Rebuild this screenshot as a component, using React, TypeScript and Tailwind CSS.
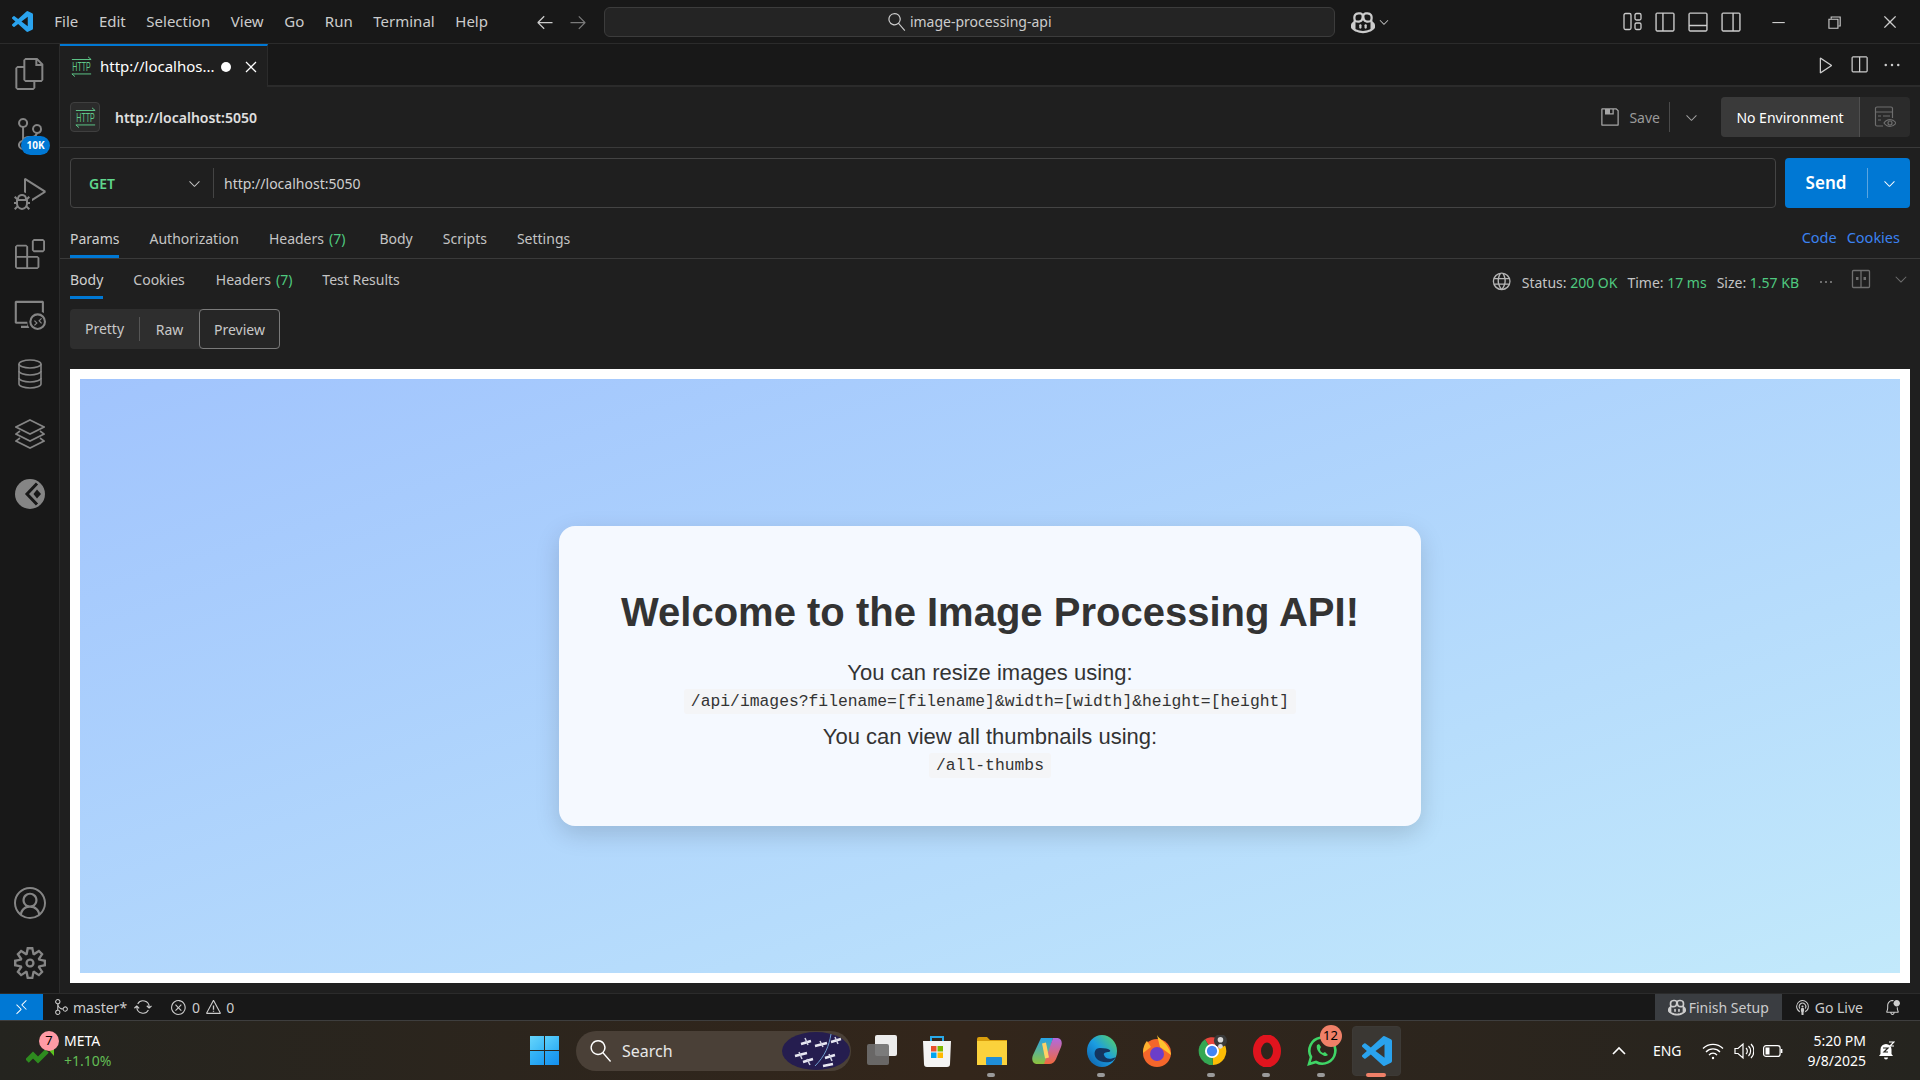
// App.tsx: VS Code window with a Thunder Client style request tab, over the Windows taskbar
import type { ReactNode } from 'react'
import {
  VscAccount,
  VscArrowLeft,
  VscArrowRight,
  VscBellDot,
  VscBroadcast,
  VscChevronDown,
  VscChromeClose,
  VscChromeMinimize,
  VscChromeRestore,
  VscClose,
  VscCopilot,
  VscDebugAlt,
  VscEllipsis,
  VscError,
  VscExtensions,
  VscFiles,
  VscGitMerge,
  VscGlobe,
  VscLayoutPanelOff,
  VscLayoutSidebarLeftOff,
  VscLayoutSidebarRightOff,
  VscPlay,
  VscRemote,
  VscRemoteExplorer,
  VscSave,
  VscSearch,
  VscSettingsGear,
  VscSourceControl,
  VscSplitHorizontal,
  VscSync,
  VscWarning,
} from 'react-icons/vsc'

const MENU = ['File', 'Edit', 'Selection', 'View', 'Go', 'Run', 'Terminal', 'Help']

function HttpIcon({ size = 24 }: { size?: number }) {
  return (
    <svg width={size} height={size} viewBox="0 0 24 24" fill="none" stroke="#5fc98a" strokeWidth="1.1" overflow="visible">
      <path d="M1 4h22M19.500 1l3.500 3M1 20.500h22M1 20.500l3.500 3" />
      <text
        x="12"
        y="17"
        textAnchor="middle"
        fill="#5fc98a"
        stroke="none"
        fontSize="14"
        textLength="21"
        lengthAdjust="spacingAndGlyphs"
        fontFamily="'Liberation Sans', sans-serif"
      >
        HTTP
      </text>
    </svg>
  )
}

function ActivityItem({ children }: { children: ReactNode }) {
  return <div className="relative flex h-[60px] items-center justify-center text-[#858585]">{children}</div>
}

function ActivityBar() {
  return (
    <div className="flex w-[60px] shrink-0 flex-col border-r border-[#2b2b2b] bg-[#181818]">
      <ActivityItem>
        <VscFiles size={32} />
      </ActivityItem>
      <ActivityItem>
        <VscSourceControl size={32} />
        <span className="absolute left-[21px] top-[32px] flex h-[19px] w-[29px] items-center justify-center rounded-full bg-[#0078d4] text-[10px] font-bold text-white">
          10K
        </span>
      </ActivityItem>
      <ActivityItem>
        <VscDebugAlt size={32} />
      </ActivityItem>
      <ActivityItem>
        <VscExtensions size={30} />
      </ActivityItem>
      <ActivityItem>
        <VscRemoteExplorer size={32} />
      </ActivityItem>
      <ActivityItem>
        <svg width="24" height="30" viewBox="0 0 24 30" fill="none" stroke="currentColor" strokeWidth="1.600">
          <ellipse cx="12" cy="5" rx="11" ry="4" />
          <path d="M1 5v20c0 2.200 5 4 11 4s11-1.800 11-4V5" />
          <path d="M1 12c0 2.200 5 4 11 4s11-1.800 11-4M1 19c0 2.200 5 4 11 4s11-1.800 11-4" />
        </svg>
      </ActivityItem>
      <ActivityItem>
        <svg width="30" height="30" viewBox="0 0 30 30" fill="none" stroke="currentColor" strokeWidth="1.600">
          <path d="M15 1l14 7-14 7L1 8z" />
          <path d="M5 12l-4 3 14 7 14-7-4-3" />
          <path d="M5 19l-4 3 14 7 14-7-4-3" />
        </svg>
      </ActivityItem>
      <ActivityItem>
        <svg width="30" height="30" viewBox="0 0 30 30">
          <circle cx="15" cy="15" r="15" fill="#858585" />
          <path d="M22 4.500 L12 15 L22 25.500" fill="none" stroke="#181818" strokeWidth="3" />
          <path d="M22 10.500 L26 15 L22 19.500 L18.500 15 Z" fill="#181818" />
        </svg>
      </ActivityItem>
      <div className="flex-1" />
      <ActivityItem>
        <VscAccount size={32} />
      </ActivityItem>
      <ActivityItem>
        <VscSettingsGear size={32} />
      </ActivityItem>
    </div>
  )
}

function TitleBar() {
  return (
    <div className="flex h-[44px] shrink-0 items-center border-b border-[#2b2b2b] bg-[#181818] text-[#cccccc]">
      <div className="flex w-[44px] justify-center pl-[1px]">
        <VsCodeLogo size={21} />
      </div>
      <div className="flex text-[15px]">
        {MENU.map((m) => (
          <span key={m} className="px-[10.300px]">
            {m}
          </span>
        ))}
      </div>
      <div className="ml-[37px] flex w-[53px] items-center justify-between text-[#cccccc]">
        <VscArrowLeft size={20} />
        <VscArrowRight size={20} className="text-[#7a7a7a]" />
      </div>
      <div className="ml-[16px] flex h-[30px] w-[731px] items-center justify-center gap-[4px] rounded-[6px] border border-[#3c3c3c] bg-[#242424] text-[14px]">
        <VscSearch size={18} className="-scale-x-100" />
        <span>image-processing-api</span>
      </div>
      <div className="ml-[16px] flex items-center gap-[2px]">
        <VscCopilot size={24} />
        <VscChevronDown size={14} />
      </div>
      <div className="ml-[231px] flex items-center gap-[11px]">
        <svg width="21" height="21" viewBox="0 0 21 21" fill="none" stroke="currentColor" strokeWidth="1.300">
          <rect x="2" y="2.500" width="7" height="16" rx="1.500" />
          <rect x="13" y="2.500" width="6" height="6.500" rx="1.500" />
          <rect x="13" y="12" width="6" height="6.500" rx="1.500" />
        </svg>
        <VscLayoutSidebarLeftOff size={22} />
        <VscLayoutPanelOff size={22} />
        <VscLayoutSidebarRightOff size={22} />
      </div>
      <div className="ml-[27px] flex items-center gap-[38px]">
        <VscChromeMinimize size={18} />
        <VscChromeRestore size={18} />
        <VscChromeClose size={18} />
      </div>
    </div>
  )
}

function TabStrip() {
  return (
    <div className="flex h-[43px] shrink-0 items-stretch border-b-2 border-[#2b2b2b] bg-[#181818]">
      <div className="-mb-[2px] flex w-[208px] items-center border-r border-t-2 border-[#2b2b2b] border-t-[#0078d4] bg-[#1f1f1f] pl-[11px] text-[15px] text-white">
        <HttpIcon size={21} />
        <span className="ml-[8px]">http://localhos...</span>
        <span className="ml-[6px] h-[10px] w-[10px] rounded-full bg-white" />
        <VscClose size={20} className="ml-[10px]" />
      </div>
      <div className="flex flex-1 items-center justify-end gap-[13px] pr-[18px] text-[#cccccc]">
        <VscPlay size={20} />
        <VscSplitHorizontal size={20} />
        <VscEllipsis size={20} />
      </div>
    </div>
  )
}

function RequestBar() {
  return (
    <div className="flex h-[61px] shrink-0 items-center border-b border-[#3a3a3a] pl-[10px] pr-[10px]">
      <div className="flex h-[30px] w-[30px] items-center justify-center rounded-[4px] border border-[#3f3f3f] bg-[#2b2b2b]">
        <HttpIcon size={21} />
      </div>
      <span className="ml-[15px] text-[14px] font-semibold text-[#e0e0e0]">http://localhost:5050</span>
      <div className="flex-1" />
      <VscSave size={20} className="text-[#a5a5a5]" />
      <span className="ml-[9px] text-[14px] text-[#9a9a9a]">Save</span>
      <span className="ml-[9px] h-[30px] w-px bg-[#4a4a4a]" />
      <VscChevronDown size={17} className="ml-[13px] text-[#a5a5a5]" />
      <div className="ml-[21px] flex h-[40px] w-[189px] items-center overflow-hidden rounded-[4px] bg-[#2b2b2b]">
        <div className="flex h-full w-[139px] items-center justify-center border-r border-[#4f4f4f] bg-[#3a3a3a] text-[14px] text-white">
          No Environment
        </div>
        <div className="flex flex-1 items-center justify-center text-[#6e6e6e]">
          <svg width="22" height="24" viewBox="0 0 22 24" fill="none" stroke="currentColor" strokeWidth="1.200">
            <path d="M9 21H3a1.500 1.500 0 0 1-1.500-1.500v-16A1.500 1.500 0 0 1 3 2h14a1.500 1.500 0 0 1 1.500 1.500V13" />
            <path d="M1.500 7h17M4 11h3M9 11h7M4 15h3" />
            <circle cx="16" cy="18" r="2" />
            <path d="M10 18c3-4.500 9-4.500 12 0-3 4.500-9 4.500-12 0z" />
          </svg>
        </div>
      </div>
    </div>
  )
}

function UrlRow() {
  return (
    <div className="flex shrink-0 gap-[9px] px-[10px] pt-[10px]">
      <div className="flex h-[50px] flex-1 items-center rounded-[4px] border border-[#444444]">
        <span className="ml-[18px] w-[97px] text-[14px] font-semibold text-[#5fd68c]">GET</span>
        <VscChevronDown size={17} className="text-[#c8c8c8]" />
        <span className="ml-[10px] h-[30px] w-px bg-[#444444]" />
        <span className="ml-[10px] text-[14px] text-[#cfcfcf]">http://localhost:5050</span>
      </div>
      <div className="flex h-[50px] w-[125px] items-center rounded-[4px] bg-[#0078d4] text-white">
        <span className="w-[83px] border-r border-[#5aa5e0] text-center text-[17px] font-semibold leading-[30px]">Send</span>
        <VscChevronDown size={17} className="ml-[13px]" />
      </div>
    </div>
  )
}

function TabLabel({ label, count, active, className = '' }: { label: string; count?: number; active?: boolean; className?: string }) {
  return (
    <span className={`relative flex h-full items-center text-[14px] ${active ? 'text-[#cfcfcf]' : 'text-[#c4c4c4]'} ${className}`}>
      {label}
      {count !== undefined && <span className="ml-[5px] text-[#4fc97f]">({count})</span>}
      {active && <span className="absolute bottom-0 left-0 h-[3px] w-full bg-[#0078d4]" />}
    </span>
  )
}

function RequestTabs() {
  return (
    <div className="flex h-[51px] shrink-0 items-stretch justify-between border-b border-[#3a3a3a] pl-[10px] pr-[20px]">
      <div className="flex gap-[30px]">
        <TabLabel label="Params" active className="pt-[10px]" />
        <TabLabel label="Authorization" className="pt-[10px]" />
        <TabLabel label="Headers" count={7} className="mr-[4px] pt-[10px]" />
        <TabLabel label="Body" className="pt-[10px]" />
        <TabLabel label="Scripts" className="pt-[10px]" />
        <TabLabel label="Settings" className="pt-[10px]" />
      </div>
      <div className="flex items-center gap-[10px] pt-[10px] text-[14.500px] text-[#3b82f0]">
        <span>Code</span>
        <span>Cookies</span>
      </div>
    </div>
  )
}

function ResponseTabs() {
  return (
    <div className="flex h-[40px] shrink-0 items-stretch justify-between pl-[10px] pr-[10px]">
      <div className="flex gap-[30px]">
        <TabLabel label="Body" active />
        <TabLabel label="Cookies" />
        <TabLabel label="Headers" count={7} className="ml-[1px]" />
        <TabLabel label="Test Results" />
      </div>
      <div className="flex items-center pt-[6px] text-[14px] text-[#c4c4c4]">
        <VscGlobe size={22} className="text-[#b5b5b5]" />
        <span className="ml-[10px]">
          Status: <span className="text-[#4fc97f]">200 OK</span>
        </span>
        <span className="ml-[10px]">
          Time: <span className="text-[#4fc97f]">17 ms</span>
        </span>
        <span className="ml-[10px]">
          Size: <span className="text-[#4fc97f]">1.57 KB</span>
        </span>
        <VscEllipsis size={16} className="ml-[19px] text-[#8a8a8a]" />
        <svg width="20" height="20" viewBox="0 0 20 20" className="ml-[17px] -mt-[6px] text-[#6e6e6e]" fill="none" stroke="currentColor" strokeWidth="1.300">
          <rect x="1.500" y="1.500" width="17" height="17" rx="1" />
          <path d="M10 1.500v17" />
          <rect x="5" y="8" width="2.500" height="3" fill="currentColor" stroke="none" />
          <rect x="12.500" y="8" width="2.500" height="3" fill="currentColor" stroke="none" />
        </svg>
        <VscChevronDown size={18} className="ml-[21px] -mt-[6px] text-[#6e6e6e]" />
      </div>
    </div>
  )
}

function ModeSwitch() {
  return (
    <div className="flex shrink-0 pl-[10px] pt-[10px]">
      <div className="flex h-[40px] w-[210px] items-center rounded-[4px] bg-[#2e2e2e] text-[14px] text-[#c8c8c8]">
        <span className="w-[70px] border-r border-[#555555] text-center leading-[24px]">Pretty</span>
        <span className="w-[59px] text-center">Raw</span>
        <span className="flex h-full w-[81px] items-center justify-center rounded-[4px] border border-[#7a7a7a] bg-[#262626]">
          Preview
        </span>
      </div>
    </div>
  )
}

function Preview() {
  const code =
    "rounded-[3px] bg-[#f4f5f7] px-[7px] py-[3px] text-[16.350px] leading-[19px] text-[#333333] [font-family:'Liberation_Mono',monospace]"
  return (
    <div className="mx-[10px] mb-[10px] mt-[20px] flex flex-1 bg-white p-[10px]">
      <div className="flex flex-1 items-center justify-center bg-gradient-to-br from-[#a1c4fd] to-[#c2e9fb]">
        <div className="flex h-[300px] w-[862px] flex-col items-center rounded-[16px] bg-[#f5f9ff] pt-[62px] text-center text-[#333333] shadow-[0_8px_24px_rgba(0,0,0,0.15)] [font-family:'Liberation_Sans',Arial,sans-serif]">
          <h1 className="text-[40px] font-bold leading-[48px]">Welcome to the Image Processing API!</h1>
          <p className="mt-[24px] text-[22px] leading-[26px]">You can resize images using:</p>
          <code className={`mt-[3px] ${code}`}>/api/images?filename=[filename]&amp;width=[width]&amp;height=[height]</code>
          <p className="mt-[10px] text-[22px] leading-[26px]">You can view all thumbnails using:</p>
          <code className={`mt-[3px] ${code}`}>/all-thumbs</code>
        </div>
      </div>
    </div>
  )
}

function StatusBar() {
  return (
    <div className="flex h-[27px] shrink-0 items-center border-t border-[#2b2b2b] bg-[#181818] text-[14px] text-[#cccccc]">
      <div className="flex h-full w-[43px] items-center justify-center bg-[#0078d4] text-white">
        <VscRemote size={17} />
      </div>
      <VscGitMerge size={17} className="ml-[10px]" />
      <span className="ml-[3px]">master*</span>
      <VscSync size={18} className="ml-[7px]" />
      <VscError size={17} className="ml-[18px]" />
      <span className="ml-[5px]">0</span>
      <VscWarning size={17} className="ml-[5px]" />
      <span className="ml-[4px]">0</span>
      <div className="flex-1" />
      <div className="flex h-full w-[127px] items-center justify-center gap-[3px] bg-[#3a3d41]">
        <VscCopilot size={18} />
        <span>Finish Setup</span>
      </div>
      <VscBroadcast size={17} className="ml-[12px]" />
      <span className="ml-[4px]">Go Live</span>
      <VscBellDot size={17} className="ml-[21px] mr-[19px]" />
    </div>
  )
}

function VsCodeLogo({ size = 30 }: { size?: number }) {
  return (
    <svg width={size} height={size} viewBox="0 0 24 24">
      <path
        fill="#2aa3ee"
        d="M23.15 2.587L18.21.21a1.494 1.494 0 0 0-1.705.29l-9.46 8.63-4.12-3.128a.999.999 0 0 0-1.276.057L.327 7.261A1 1 0 0 0 .326 8.74L3.899 12 .326 15.26a1 1 0 0 0 .001 1.479L1.65 17.94a.999.999 0 0 0 1.276.057l4.12-3.128 9.46 8.63a1.492 1.492 0 0 0 1.704.29l4.942-2.377A1.5 1.5 0 0 0 24 20.06V3.939a1.5 1.5 0 0 0-.85-1.352zm-5.146 14.861L10.826 12l7.178-5.448v10.896z"
      />
    </svg>
  )
}

function TaskIcon({ children, dot, active }: { children: ReactNode; dot?: boolean; active?: boolean }) {
  return (
    <div className="relative flex h-[60px] w-[55px] items-center justify-center">
      {active && <span className="absolute inset-x-[3px] top-[5px] bottom-[5px] rounded-[4px] border border-[#3d3a36] bg-[#3a3733]" />}
      <span className="relative flex">{children}</span>
      {dot && <span className="absolute bottom-[4px] left-[23px] h-[4px] w-[8px] rounded-full bg-[#9a9a9a]" />}
      {active && <span className="absolute bottom-[4px] left-[17px] h-[4px] w-[20px] rounded-full bg-[#f08068]" />}
    </div>
  )
}

function Taskbar() {
  return (
    <div className="flex h-[60px] shrink-0 items-center border-t border-[#3e3e3e] bg-gradient-to-r from-[#24241f] via-[#33261b] to-[#25241f] text-white">
      <div className="flex w-[516px] items-center pl-[26px]">
        <div className="relative h-[40px] w-[38px]">
          <svg width="29" height="20" viewBox="0 0 29 20" className="absolute left-0 top-[15px]">
            <path d="M1 15l6-6 5 5 9-9" fill="none" stroke="#2e8b1f" strokeWidth="5" />
            <path d="M20 1h8v9z" fill="#5cc41f" />
          </svg>
          <span className="absolute left-[13px] top-0 flex h-[20px] w-[20px] items-center justify-center rounded-full bg-[#ff9aa5] text-[13px] text-black">
            7
          </span>
        </div>
        <div className="flex flex-col text-[14px] leading-[20px]">
          <span>META</span>
          <span className="text-[#63bd55]">+1.10%</span>
        </div>
      </div>
      <div className="ml-[14px] grid h-[29px] w-[29px] grid-cols-2 gap-[1px]">
        <span className="bg-gradient-to-br from-[#66d5fb] to-[#39b8f6]" />
        <span className="bg-gradient-to-br from-[#5bd0fb] to-[#2eaef5]" />
        <span className="bg-gradient-to-br from-[#39b9f7] to-[#1f9df2]" />
        <span className="bg-gradient-to-br from-[#2aa9f5] to-[#1490ee]" />
      </div>
      <div className="ml-[17px] flex h-[40px] w-[275px] items-center rounded-full bg-[#4a4037] pl-[14px]">
        <VscSearch size={22} className="-scale-x-100" />
        <span className="ml-[10px] text-[16px] text-[#e8e8e8]">Search</span>
        <svg width="70" height="38" viewBox="0 0 70 38" className="ml-auto">
          <ellipse cx="35" cy="19" rx="34" ry="19" fill="#251d4f" />
          <path d="M14 24l12-3M22 30l10-3M20 12l10-3M34 14l12-3M44 26l10-3M50 10l10-3M42 34l10-2" stroke="#e8e8f2" strokeWidth="2.500" />
          <path d="M18 20l3 7M26 27l3 6M24 6l3 7M39 9l3 6M48 22l3 7M54 5l3 7" stroke="#cfd0e0" strokeWidth="1.500" />
          <path d="M50 2c-2 12-6 22-16 32" stroke="#6f9fd0" strokeWidth="1" fill="none" />
        </svg>
      </div>
      <div className="ml-[3px] flex">
        <TaskIcon>
          <span className="relative block h-[42px] w-[30px]">
            <span className="absolute right-0 top-[5px] h-[21px] w-[22px] rounded-[2px] bg-[#ececec]" />
            <span className="absolute left-0 top-[14px] h-[21px] w-[22px] rounded-[2px] bg-[#6f6f6f]/90" />
          </span>
        </TaskIcon>
        <TaskIcon>
          <svg width="30" height="32" viewBox="0 0 30 32">
            <path d="M9 7V2h12v5" fill="none" stroke="#29a9e8" strokeWidth="2" />
            <path d="M1 6h28l-1 23a3 3 0 0 1-3 3H5a3 3 0 0 1-3-3z" fill="#f4f4f4" />
            <rect x="9" y="11" width="5.500" height="5.500" fill="#e8502c" />
            <rect x="15.500" y="11" width="5.500" height="5.500" fill="#7db800" />
            <rect x="9" y="17.500" width="5.500" height="5.500" fill="#00a4ef" />
            <rect x="15.500" y="17.500" width="5.500" height="5.500" fill="#ffb900" />
          </svg>
        </TaskIcon>
        <TaskIcon dot>
          <svg width="30" height="28" viewBox="0 0 30 28">
            <path d="M0 2a2 2 0 0 1 2-2h8l3 3h17v25H0z" fill="#d99e0c" />
            <rect y="4" width="30" height="24" fill="#fbd23c" />
            <rect x="9" y="20" width="16" height="8" rx="1" fill="#1f8ed8" />
          </svg>
        </TaskIcon>
        <TaskIcon>
          <svg width="30" height="30" viewBox="0 0 30 30">
            <defs>
              <linearGradient id="cop1" x1="0" y1="0" x2="0" y2="1">
                <stop offset="0" stopColor="#27a3e8" />
                <stop offset="1" stopColor="#8fc23c" />
              </linearGradient>
              <linearGradient id="cop2" x1="0" y1="0" x2="0" y2="1">
                <stop offset="0" stopColor="#b06ae0" />
                <stop offset="1" stopColor="#f0693e" />
              </linearGradient>
            </defs>
            <path d="M9 2h12L14 28H5C1 28-1 24 1 19z" fill="url(#cop1)" />
            <path d="M21 2h4c4 0 6 4 4 9l-5 12c-1 3-4 5-7 5h-5z" fill="url(#cop2)" />
            <path d="M12 7l3 15" stroke="#ffd166" strokeWidth="4" />
          </svg>
        </TaskIcon>
        <TaskIcon dot>
          <svg width="30" height="32" viewBox="0 0 30 32">
            <defs>
              <linearGradient id="edg" x1="0" y1="1" x2="1" y2="0">
                <stop offset="0" stopColor="#0c59a4" />
                <stop offset="0.5" stopColor="#1b9de2" />
                <stop offset="1" stopColor="#5ed85a" />
              </linearGradient>
            </defs>
            <ellipse cx="15" cy="16" rx="15" ry="16" fill="url(#edg)" />
            <path d="M13 13c-5 0-7 5-4 10 3 4 9 5 14 4 3-1 4-2 6-5-6 3-11 2-12-2-1-2 2-3 5-3 3-1 1-4-9-4z" fill="#14355f" />
          </svg>
        </TaskIcon>
        <TaskIcon>
          <svg width="30" height="32" viewBox="0 0 30 32">
            <circle cx="15" cy="18" r="14" fill="#f4662b" />
            <path d="M15 0c2 4 8 6 12 14 2 4 2 5 2 6L18 12z" fill="#fdc22e" />
            <path d="M1 18C1 12 3 8 5 6l4 6z" fill="#ffb02e" />
            <circle cx="15" cy="19" r="7" fill="#6b3ec9" />
          </svg>
        </TaskIcon>
        <TaskIcon dot>
          <svg width="30" height="32" viewBox="0 0 32 32">
            <path d="M16 16L8.500 3.500A15 15 0 0 1 30 10z" fill="#e8453c" />
            <path d="M16 16L30 10A15 15 0 0 1 17 31z" fill="#fbbc05" />
            <path d="M16 16L17 31A15 15 0 0 1 8.500 3.500z" fill="#34a853" />
            <circle cx="16" cy="16" r="7.500" fill="#fff" />
            <circle cx="16" cy="16" r="5.500" fill="#4285f4" />
            <circle cx="25" cy="5" r="7" fill="#3a3a3a" />
            <circle cx="25" cy="4" r="3" fill="#d8d8d8" />
            <circle cx="25" cy="11" r="2.500" fill="#d8d8d8" />
          </svg>
        </TaskIcon>
        <TaskIcon dot>
          <svg width="30" height="32" viewBox="0 0 30 32">
            <ellipse cx="15" cy="16" rx="10" ry="12.500" fill="none" stroke="#e0141e" strokeWidth="8" />
          </svg>
        </TaskIcon>
        <TaskIcon dot>
          <span className="relative flex">
            <svg width="32" height="32" viewBox="0 0 32 32">
              <path d="M3 29l2-7a13 13 0 1 1 5 5z" fill="none" stroke="#3fd566" strokeWidth="2.600" />
              <path d="M11 10c-1 3 1 7 4 9s5 3 7 1l-3-3-2 1c-2-1-3-2-3-4l1-2-2-3z" fill="#3fd566" />
            </svg>
            <span className="absolute -right-[4px] -top-[10px] flex h-[22px] w-[22px] items-center justify-center rounded-full bg-[#f08068] text-[13px] text-black">
              12
            </span>
          </span>
        </TaskIcon>
        <TaskIcon active>
          <VsCodeLogo size={30} />
        </TaskIcon>
      </div>
      <div className="flex flex-1 items-center justify-end text-[14px]">
        <svg width="16" height="10" viewBox="0 0 16 10" fill="none" stroke="white" strokeWidth="1.600">
          <path d="M2 8l6-6 6 6" />
        </svg>
        <span className="ml-[26px]">ENG</span>
        <svg width="22" height="18" viewBox="0 0 22 18" fill="none" stroke="white" strokeWidth="1.300" className="ml-[20px]">
          <path d="M1 6.500a14 14 0 0 1 20 0M4 10a9.500 9.500 0 0 1 14 0M7 13.200a5 5 0 0 1 8 0" />
          <circle cx="11" cy="16" r="1.200" fill="white" stroke="none" />
        </svg>
        <svg width="20" height="18" viewBox="0 0 20 18" fill="none" stroke="white" strokeWidth="1.200" className="ml-[10px]">
          <path d="M1 6.500h3L9 2v14l-5-4.500H1zM12 6a4 4 0 0 1 0 6M14.500 4a7 7 0 0 1 0 10M17 2a10 10 0 0 1 0 14" />
        </svg>
        <svg width="20" height="12" viewBox="0 0 20 12" fill="none" stroke="white" strokeWidth="1.200" className="ml-[9px]">
          <rect x="0.600" y="0.600" width="16.500" height="10.800" rx="2.500" />
          <rect x="2.500" y="2.500" width="4" height="7" fill="white" stroke="none" />
          <path d="M18.600 4v4" strokeWidth="1.600" />
        </svg>
        <div className="ml-[25px] flex flex-col items-end leading-[20px]">
          <span>5:20 PM</span>
          <span>9/8/2025</span>
        </div>
        <svg width="18" height="20" viewBox="0 0 18 20" className="ml-[11px] mr-[25px]" fill="white">
          <path d="M9 3a5.500 5.500 0 0 0-5.500 5.500V13L2 15h14l-1.500-2V8.500A5.500 5.500 0 0 0 9 3zM7 16.500h4a2 2 0 0 1-4 0z" />
          <path d="M6 7h5l-4 4h4" fill="none" stroke="#25241f" strokeWidth="1.200" />
          <path d="M12 1h5l-4 4h4" fill="none" stroke="white" strokeWidth="1.200" />
        </svg>
      </div>
    </div>
  )
}

export default function App() {
  return (
    <div className="flex h-[1080px] w-[1920px] flex-col overflow-hidden bg-[#1f1f1f] [font-family:'Noto_Sans',sans-serif]">
      <TitleBar />
      <div className="flex min-h-0 flex-1">
        <ActivityBar />
        <div className="flex min-w-0 flex-1 flex-col">
          <TabStrip />
          <RequestBar />
          <UrlRow />
          <RequestTabs />
          <ResponseTabs />
          <ModeSwitch />
          <Preview />
        </div>
      </div>
      <StatusBar />
      <Taskbar />
    </div>
  )
}
